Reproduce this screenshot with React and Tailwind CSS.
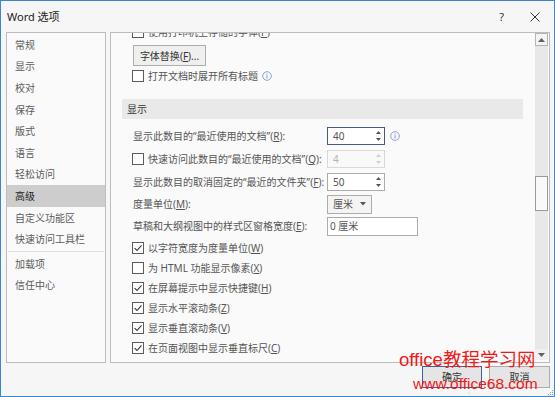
import React from 'react';

const navItems = ['常规', '显示', '校对', '保存', '版式', '语言', '轻松访问', '高级', '自定义功能区', '快速访问工具栏'];
const navItems2 = ['加载项', '信任中心'];

function CheckBox({ checked }) {
  return (
    <span className="flex h-[12px] w-[12px] shrink-0 items-center justify-center border border-[#5c5c5c] bg-white">
      {checked && (
        <svg width="10" height="10" viewBox="0 0 10 10">
          <path d="M1.6 5.1 L4 7.5 L8.5 2.3" fill="none" stroke="#333" strokeWidth="1.1" />
        </svg>
      )}
    </span>
  );
}

function CheckRow({ checked, children }) {
  return (
    <div className="flex h-[20px] shrink-0 items-center gap-[4px] pl-[10px]">
      <CheckBox checked={checked} />
      <span>{children}</span>
    </div>
  );
}

function Key({ k }) {
  return (
    <>
      (<span className="underline underline-offset-1">{k}</span>)
    </>
  );
}

function Arrows({ color }) {
  return (
    <span className="flex flex-col gap-[4px]">
      <svg width="5" height="3" viewBox="0 0 5 3"><path d="M0 3 L2.5 0 L5 3Z" fill={color} /></svg>
      <svg width="5" height="3" viewBox="0 0 5 3"><path d="M0 0 L2.5 3 L5 0Z" fill={color} /></svg>
    </span>
  );
}

function Spin({ value, focused, disabled }) {
  const border = focused ? 'border-[#47597c]' : disabled ? 'border-[#d9d9d9]' : 'border-[#acacac]';
  return (
    <div className={`flex h-[18px] w-[58px] items-center justify-between border ${border} ${disabled ? 'bg-[#f9f9f9] text-[#b4b4b4]' : 'bg-white'} pl-[5px] pr-[3px]`}>
      <span>{value}</span>
      <Arrows color={disabled ? '#cfcfcf' : '#555'} />
    </div>
  );
}

function InfoIcon() {
  return (
    <svg width="10" height="10" viewBox="0 0 10 10">
      <circle cx="5" cy="5" r="4.3" fill="none" stroke="#7d9bd0" strokeWidth="0.9" />
      <rect x="4.5" y="4.2" width="1" height="3.2" fill="#7d9bd0" />
      <rect x="4.5" y="2.5" width="1" height="1" fill="#7d9bd0" />
    </svg>
  );
}

function LabelRow({ label, children }) {
  return (
    <div className="flex h-[22px] shrink-0 items-center pl-[11px]">
      <span className="w-[194px] shrink-0">{label}</span>
      {children}
    </div>
  );
}

export default function App() {
  return (
    <div className="relative flex h-[397px] w-[555px] flex-col overflow-hidden border border-[#3b86d1] bg-[#f6f6f6] font-['Noto_Sans','Noto_Sans_CJK_SC',sans-serif] text-[10px] leading-none text-[#555]">
      <div className="flex h-[31px] shrink-0 items-center justify-between pl-[6px] pr-[14px]">
        <span className="text-[11px] text-[#222]">Word 选项</span>
        <div className="flex items-center gap-[26px] text-[#333]">
          <span className="text-[11px]">?</span>
          <svg width="10" height="10" viewBox="0 0 10 10">
            <path d="M0.5 0.5 L9.5 9.5 M9.5 0.5 L0.5 9.5" stroke="#333" strokeWidth="1" />
          </svg>
        </div>
      </div>

      <div className="flex h-[331px] shrink-0 gap-[4px] pl-[5px] pr-[4px]">
        <div className="flex w-[100px] shrink-0 flex-col border border-[#bcbcbc] bg-[#fafafa] pt-[1px] text-[#5a5a5a]">
          {navItems.map((item) => (
            <div
              key={item}
              className={`flex h-[21.6px] shrink-0 items-center pl-[8px] ${item === '高级' ? 'bg-[#cdcdcd] text-[#222]' : ''}`}
            >
              {item}
            </div>
          ))}
          <div className="mx-[1px] my-[1px] h-px shrink-0 bg-[#dedede]" />
          {navItems2.map((item) => (
            <div key={item} className="flex h-[21.6px] shrink-0 items-center pl-[8px]">
              {item}
            </div>
          ))}
        </div>

        <div className="flex flex-1 border border-[#bcbcbc] bg-[#fafafa]">
          <div className="flex flex-1 flex-col overflow-hidden pl-[11px] pr-[12px]">
            <div className="-mt-[11px]">
              <CheckRow>使用打印机上存储的字体<Key k="P" /></CheckRow>
            </div>
            <div className="mt-[3px] pl-[11px]">
              <div className="flex h-[21px] w-[73px] items-center justify-center border border-[#adadad] bg-[#efefef] text-[#333]">
                字体替换<Key k="F" />...
              </div>
            </div>
            <div className="flex h-[20px] shrink-0 items-center gap-[4px] pl-[10px]">
              <CheckBox />
              <span>打开文档时展开所有标题</span>
              <InfoIcon />
            </div>
            <div className="mt-[13px] flex h-[20px] shrink-0 items-center bg-[#e9e9e9] pl-[5px] text-[#333]">
              显示
            </div>
            <div className="mt-[6px]">
              <LabelRow label={<>显示此数目的“最近使用的文档”<Key k="R" />:</>}>
                <Spin value="40" focused />
                <span className="ml-[5px]"><InfoIcon /></span>
              </LabelRow>
            </div>
            <div className="mt-[1px] flex h-[22px] shrink-0 items-center pl-[10px]">
              <span className="flex w-[195px] shrink-0 items-center gap-[4px]">
                <CheckBox />
                <span>快速访问此数目的“最近使用的文档”<Key k="Q" />:</span>
              </span>
              <Spin value="4" disabled />
            </div>
            <div className="mt-[1px]">
              <LabelRow label={<>显示此数目的取消固定的“最近的文件夹”<Key k="F" />:</>}>
                <Spin value="50" />
              </LabelRow>
            </div>
            <LabelRow label={<>度量单位<Key k="M" />:</>}>
              <div className="flex h-[19px] w-[45px] items-center justify-between border border-[#acacac] bg-[#f4f4f4] pl-[5px] pr-[5px]">
                <span>厘米</span>
                <svg width="6" height="4" viewBox="0 0 6 4"><path d="M0 0 L3 3.5 L6 0Z" fill="#555" /></svg>
              </div>
            </LabelRow>
            <LabelRow label={<>草稿和大纲视图中的样式区窗格宽度<Key k="E" />:</>}>
              <div className="flex h-[19px] w-[91px] items-center border border-[#acacac] bg-white pl-[2px]">
                0 厘米
              </div>
            </LabelRow>
            <div className="mt-[1px] flex flex-col">
              <CheckRow checked>以字符宽度为度量单位<Key k="W" /></CheckRow>
              <CheckRow>为 HTML 功能显示像素<Key k="X" /></CheckRow>
              <CheckRow checked>在屏幕提示中显示快捷键<Key k="H" /></CheckRow>
              <CheckRow checked>显示水平滚动条<Key k="Z" /></CheckRow>
              <CheckRow checked>显示垂直滚动条<Key k="V" /></CheckRow>
              <CheckRow checked>在页面视图中显示垂直标尺<Key k="C" /></CheckRow>
            </div>
          </div>

          <div className="mb-[2px] mr-[1px] flex w-[13px] shrink-0 flex-col bg-[#e8e8e8]">
            <div className="flex h-[13px] items-center justify-center border border-[#b4b4b4] bg-[#f4f4f4]">
              <svg width="7" height="4" viewBox="0 0 7 4"><path d="M0 4 L3.5 0 L7 4Z" fill="#606060" /></svg>
            </div>
            <div className="mt-[130px] h-[35px] border border-[#9a9a9a] bg-[#f9f9f9]" />
            <div className="flex-1" />
            <div className="flex h-[11px] items-center justify-center bg-[#f0f0f0]">
              <svg width="7" height="4" viewBox="0 0 7 4"><path d="M0 0 L3.5 4 L7 0Z" fill="#606060" /></svg>
            </div>
          </div>
        </div>
      </div>

      <div className="flex shrink-0 justify-end gap-[7px] pr-[4px] pt-[3px]">
        <div className="flex h-[22px] w-[60px] items-center justify-center border border-[#3c5f95] bg-[#e5e5e5] text-[#333]">
          确定
        </div>
        <div className="flex h-[22px] w-[61px] items-center justify-center border border-[#adadad] bg-[#e5e5e5] text-[#333]">
          取消
        </div>
      </div>

      <div className="absolute bottom-[1px] right-[1px] grid grid-cols-3 gap-[1px]">
        <span />
        <span />
        <span className="h-[1px] w-[1px] bg-[#999]" />
        <span />
        <span className="h-[1px] w-[1px] bg-[#999]" />
        <span className="h-[1px] w-[1px] bg-[#999]" />
        <span className="h-[1px] w-[1px] bg-[#999]" />
        <span className="h-[1px] w-[1px] bg-[#999]" />
        <span className="h-[1px] w-[1px] bg-[#999]" />
      </div>

      <div className="absolute left-[398px] top-[350px] whitespace-nowrap font-['Liberation_Sans','Noto_Sans_CJK_SC',sans-serif] text-[18.5px] leading-none text-[#f01818]">
        office教程学习网
      </div>
      <div className="absolute left-[412px] top-[375px] whitespace-nowrap font-['Liberation_Sans',sans-serif] text-[15.5px] leading-none text-[#f01818]">
        www.office68.com
      </div>
    </div>
  );
}
